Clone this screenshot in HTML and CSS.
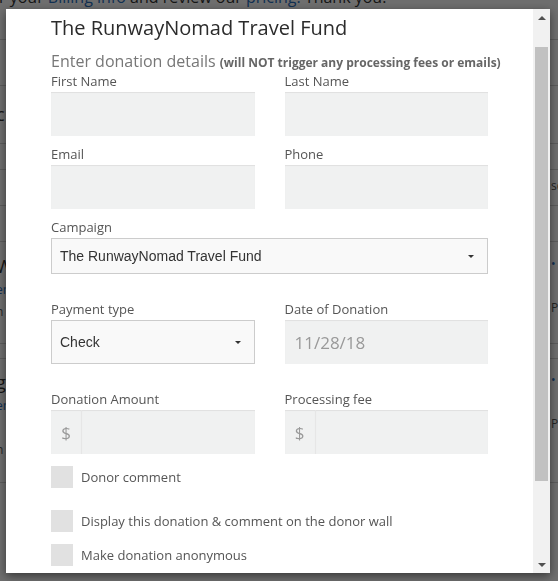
FILE: index.html
```html
<!DOCTYPE html>
<html lang="en">

<head>
    <meta charset="UTF-8">
    <meta name="viewport" content="width=device-width, initial-scale=1.0">
    <title>Enter donation</title>
    <link rel="stylesheet" href="styles.css">
</head>

<body>
    <div class="page">
        <p class="notice">r your <a href="#">Billing info</a> and review our <a href="#">pricing.</a> Thank you.</p>
        <div class="table">
            <div class="row row-1"></div>
            <div class="row row-2"></div>
            <div class="row row-3">
                <div class="cell-left"><span class="big">c</span></div>
            </div>
            <div class="row row-4"></div>
            <div class="row row-5">
                <div class="cell-left"></div>
                <div class="cell-right"><span class="small">sc</span></div>
            </div>
            <div class="row row-6"></div>
            <div class="row row-7">
                <div class="cell-left">
                    <span class="big">W</span>
                    <span class="small link">er</span>
                    <span class="small">n</span>
                </div>
                <div class="cell-right">
                    <span class="small link">• A</span>
                    <span class="small spaced">Pc</span>
                </div>
            </div>
            <div class="row row-8"></div>
            <div class="row row-9">
                <div class="cell-left">
                    <span class="big">g</span>
                    <span class="small link">er</span>
                    <span class="small spaced">n</span>
                </div>
                <div class="cell-right">
                    <span class="small link">• A</span>
                    <span class="small spaced">Pc</span>
                </div>
            </div>
        </div>
    </div>

    <div class="backdrop"></div>

    <div class="modal">
        <div class="modal-body">
            <h2 class="title">The RunwayNomad Travel Fund</h2>
            <p class="subtitle">Enter donation details <b>(will NOT trigger any processing fees or emails)</b></p>

            <div class="form-row">
                <div class="field">
                    <label>First Name</label>
                    <div class="input"></div>
                </div>
                <div class="field">
                    <label>Last Name</label>
                    <div class="input"></div>
                </div>
            </div>

            <div class="form-row">
                <div class="field">
                    <label>Email</label>
                    <div class="input"></div>
                </div>
                <div class="field">
                    <label>Phone</label>
                    <div class="input"></div>
                </div>
            </div>

            <div class="form-row single wide-gap">
                <div class="field">
                    <label>Campaign</label>
                    <div class="select short">
                        <span>The RunwayNomad Travel Fund</span>
                        <span class="caret"></span>
                    </div>
                </div>
            </div>

            <div class="form-row wide-gap">
                <div class="field">
                    <label>Payment type</label>
                    <div class="select">
                        <span>Check</span>
                        <span class="caret"></span>
                    </div>
                </div>
                <div class="field">
                    <label>Date of Donation</label>
                    <div class="input date">11/28/18</div>
                </div>
            </div>

            <div class="form-row small-gap">
                <div class="field">
                    <label>Donation Amount</label>
                    <div class="input-group">
                        <span class="addon">$</span>
                        <div class="input"></div>
                    </div>
                </div>
                <div class="field">
                    <label>Processing fee</label>
                    <div class="input-group">
                        <span class="addon">$</span>
                        <div class="input"></div>
                    </div>
                </div>
            </div>

            <div class="check comment">
                <span class="box"></span>
                <span>Donor comment</span>
            </div>
            <div class="check">
                <span class="box"></span>
                <span>Display this donation &amp; comment on the donor wall</span>
            </div>
            <div class="check">
                <span class="box"></span>
                <span>Make donation anonymous</span>
            </div>
        </div>

        <div class="scrollbar">
            <div class="scroll-btn"><span class="arrow-up"></span></div>
            <div class="scroll-track"><div class="thumb"></div></div>
            <div class="scroll-btn"><span class="arrow-down"></span></div>
        </div>
    </div>
</body>

</html>
```

FILE: styles.css
```css
body {
    margin: 0;
    padding: 0;
    height: 581px;
    overflow: hidden;
    font-family: "Open Sans", Arial, sans-serif;
    background-color: #ffffff;
}

/* page behind the dialog */

.notice {
    margin: -13px 0 0 -1px;
    font-size: 16px;
    line-height: 20px;
    color: #333333;
    white-space: nowrap;
}

.notice a {
    color: #2a6ebb;
    text-decoration: none;
}

.row {
    display: flex;
    justify-content: space-between;
    align-items: flex-start;
    box-sizing: border-box;
    border-bottom: 1px solid #d4d4d4;
}

.row-1 { height: 33px; }
.row-2 { height: 46px; }
.row-3 { height: 58px; padding-top: 17px; }
.row-4 { height: 26px; }
.row-5 { height: 36px; padding-top: 7px; }
.row-6 { height: 36px; }
.row-7 { height: 102px; padding-top: 13px; }
.row-8 { height: 15px; }
.row-9 { height: 124px; padding-top: 12px; }

.cell-left,
.cell-right {
    display: flex;
    flex-direction: column;
    gap: 4px;
}

.cell-left {
    margin-left: -4px;
}

.cell-right {
    align-items: flex-start;
    width: 14px;
    margin-right: -7px;
}

.big {
    font-size: 18px;
    line-height: 22px;
    color: #333333;
}

.small {
    font-size: 12px;
    line-height: 18px;
    color: #555555;
    white-space: nowrap;
}

.small.link {
    color: #2a6ebb;
}

.spaced {
    margin-top: 22px;
}

.backdrop {
    position: fixed;
    inset: 0;
    background-color: rgba(0, 0, 0, 0.57);
}

/* dialog */

.modal {
    position: fixed;
    top: 9px;
    left: 6px;
    width: 544px;
    height: 564px;
    display: flex;
    background-color: #ffffff;
    box-shadow: 0 3px 9px rgba(0, 0, 0, 0.5);
    overflow: hidden;
}

.modal-body {
    flex: 1;
    padding: 4px 45px 0;
    overflow: hidden;
}

.title {
    margin: 0;
    font-size: 20px;
    font-weight: normal;
    line-height: 30px;
    color: #2b2b2b;
}

.subtitle {
    margin: 7px 0 0;
    font-size: 16px;
    line-height: 22px;
    color: #777777;
    white-space: nowrap;
}

.subtitle b {
    font-size: 12px;
    line-height: 1;
    color: #666666;
}

.form-row {
    display: grid;
    grid-template-columns: 1fr 1fr;
    column-gap: 30px;
    margin-bottom: 9px;
}

.form-row.single {
    grid-template-columns: 1fr;
}

.form-row.wide-gap {
    margin-bottom: 26px;
}

.form-row.small-gap {
    margin-bottom: 12px;
}

label {
    display: block;
    margin-bottom: 2px;
    font-size: 13px;
    line-height: 18px;
    color: #555555;
}

.input {
    height: 44px;
    box-sizing: border-box;
    background-color: #f0f1f1;
    box-shadow: inset 0 1px 1px rgba(0, 0, 0, 0.07);
}

.input.date {
    display: flex;
    align-items: center;
    padding-left: 10px;
    font-size: 17px;
    color: #999999;
}

.select {
    display: flex;
    justify-content: space-between;
    align-items: center;
    height: 44px;
    box-sizing: border-box;
    padding: 0 13px 0 8px;
    border: 1px solid #cccccc;
    background-color: #f9f9f9;
    font-family: "Liberation Sans", Arial, sans-serif;
    font-size: 14px;
    color: #333333;
}

.select.short {
    height: 36px;
}

.caret {
    width: 0;
    height: 0;
    border-top: 3px solid #333333;
    border-left: 3px solid transparent;
    border-right: 3px solid transparent;
}

.input-group {
    display: flex;
}

.input-group .input {
    flex: 1;
}

.addon {
    display: flex;
    justify-content: center;
    align-items: center;
    width: 31px;
    height: 44px;
    box-sizing: border-box;
    border-right: 1px solid #e6e6e6;
    background-color: #f0f1f1;
    box-shadow: inset 0 1px 1px rgba(0, 0, 0, 0.07);
    font-size: 17px;
    color: #999999;
}

.check {
    display: flex;
    align-items: center;
    gap: 8px;
    margin-bottom: 12px;
    font-size: 13px;
    line-height: 22px;
    color: #555555;
}

.check.comment {
    margin-bottom: 22px;
}

.box {
    width: 22px;
    height: 22px;
    background-color: #e1e1e1;
}

/* fake scrollbar of the dialog */

.scrollbar {
    display: flex;
    flex-direction: column;
    width: 17px;
    background-color: #f1f1f1;
}

.scroll-btn {
    display: flex;
    justify-content: center;
    align-items: center;
    height: 17px;
}

.arrow-up,
.arrow-down {
    width: 0;
    height: 0;
    border-left: 4px solid transparent;
    border-right: 4px solid transparent;
}

.arrow-up {
    border-bottom: 4px solid #505050;
}

.arrow-down {
    border-top: 4px solid #505050;
}

.scroll-track {
    flex: 1;
    padding: 21px 2px 0;
}

.thumb {
    height: 434px;
    background-color: #c1c1c1;
}
```
